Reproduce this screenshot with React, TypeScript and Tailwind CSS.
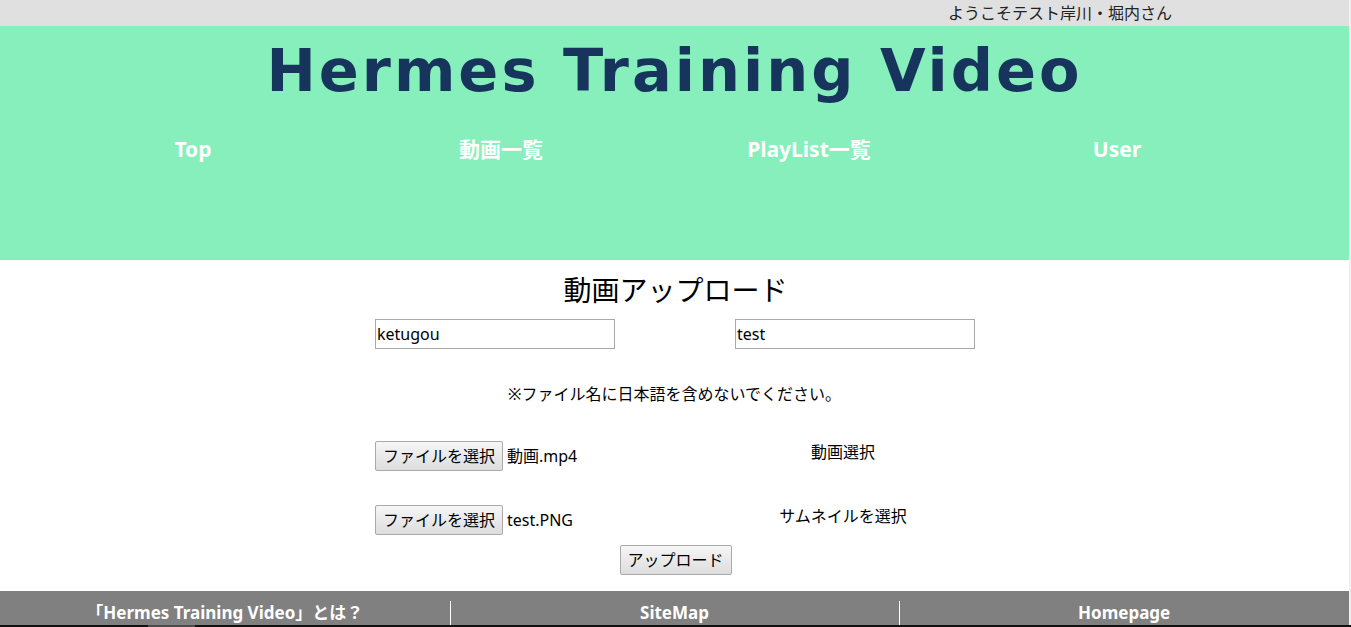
import React from 'react';

const jp = "font-['Noto_Sans','Noto_Sans_CJK_JP',sans-serif]";

const navItems = ['Top', '動画一覧', 'PlayList一覧', 'User'];
const footerItems = ['「Hermes Training Video」とは？', 'SiteMap', 'Homepage'];

const FileRow: React.FC<{ file: string; label: string }> = ({ file, label }) => (
  <div className="flex items-center h-[30px]">
    <button className="h-[30px] w-[128px] border border-[#a9a9a9] rounded-[2px] bg-gradient-to-b from-[#f6f6f6] to-[#dddddd] text-[16px] text-black">
      ファイルを選択
    </button>
    <span className="ml-[4px] w-[236px] text-[16px] text-black">{file}</span>
    <span className="w-[200px] text-center text-[16px] text-black -mt-[8px]">{label}</span>
  </div>
);

const App: React.FC = () => {
  return (
    <div className={`${jp} w-[1351px] h-[627px] overflow-hidden flex flex-col bg-white`}>
      <div className="flex flex-1 min-h-0">
        <div className="w-[1349px] flex flex-col">
          {/* Top bar */}
          <div className="h-[26px] bg-[#e0e0e0] flex items-center justify-end pr-[177px]">
            <span className="text-[16px] text-[#222]">ようこそテスト岸川・堀内さん</span>
          </div>

          {/* Header */}
          <div className="h-[234px] bg-[#86efbc]">
            <h1 className="text-center font-['DejaVu_Sans',sans-serif] font-bold text-[59px] tracking-[3px] text-[#17345c] leading-none pt-[15px]">
              Hermes Training Video
            </h1>
            <ul className="ml-[39px] w-[1232px] grid grid-cols-4 mt-[34px]">
              {navItems.map((item) => (
                <li key={item} className="text-center text-white font-bold text-[21px]">
                  {item}
                </li>
              ))}
            </ul>
          </div>

          {/* Main */}
          <div className="flex-1 flex flex-col items-center">
            <h2 className="text-[28px] text-black leading-none mt-[16px] ml-[2px]">動画アップロード</h2>
            <div className="flex gap-[120px] mt-[15px] ml-[1px]">
              <input
                defaultValue="ketugou"
                className="w-[240px] h-[30px] border border-[#a9a9a9] px-[1px] text-[16px] text-black outline-none"
              />
              <input
                defaultValue="test"
                className="w-[240px] h-[30px] border border-[#a9a9a9] px-[1px] text-[16px] text-black outline-none"
              />
            </div>
            <p className="mt-[33px] text-[16px] text-black">※ファイル名に日本語を含めないでください。</p>
            <div className="self-start ml-[375px] mt-[35px] flex flex-col gap-[34px]">
              <FileRow file="動画.mp4" label="動画選択" />
              <FileRow file="test.PNG" label="サムネイルを選択" />
            </div>
            <button className="mt-[10px] ml-[2px] h-[30px] w-[112px] border border-[#a9a9a9] rounded-[2px] bg-gradient-to-b from-[#f6f6f6] to-[#dddddd] text-[16px] text-black">
              アップロード
            </button>
          </div>

          {/* Footer */}
          <div className="h-[34px] bg-[#808080] grid grid-cols-3">
            {footerItems.map((item, i) => (
              <div key={item} className="relative flex items-end justify-center pb-[0px]">
                {i > 0 && <span className="absolute left-0 top-[10px] bottom-0 w-px bg-white" />}
                <span className="text-white font-bold text-[17px] leading-[24px]">{item}</span>
              </div>
            ))}
          </div>
        </div>
        <div className="w-[2px] bg-[#f0f0f0]" />
      </div>
      <div className="h-[2px] bg-[#111] flex">
        <div className="ml-[148px] w-[47px] bg-[#4a4a4a]" />
      </div>
    </div>
  );
};

export default App;
